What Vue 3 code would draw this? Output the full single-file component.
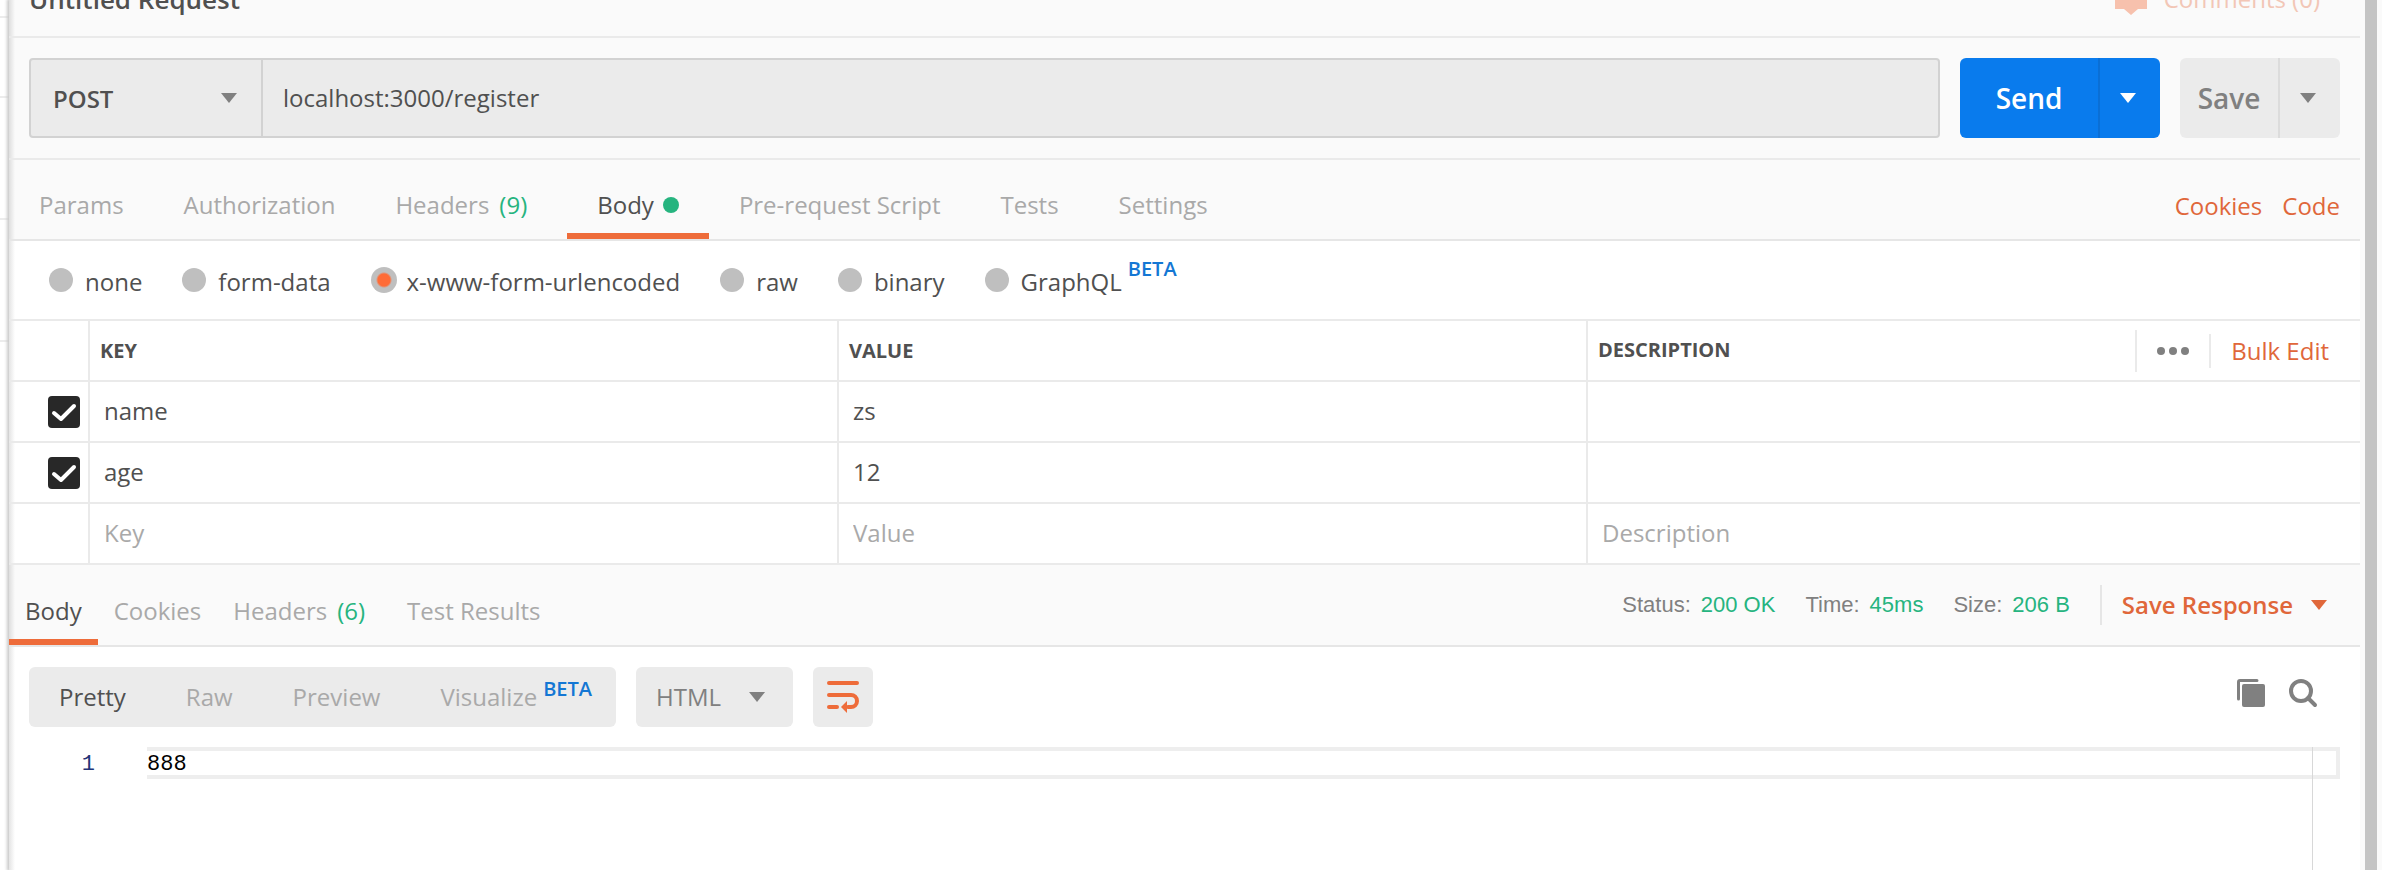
<script setup>
import { ref } from 'vue'

const url = ref('localhost:3000/register')
const mode = ref('x-www-form-urlencoded')
const tabs = [
  { label: 'Params' },
  { label: 'Authorization' },
  { label: 'Headers', count: '(9)' },
  { label: 'Body', active: true, dot: true },
  { label: 'Pre-request Script' },
  { label: 'Tests' },
  { label: 'Settings' },
]
const modes = [
  { label: 'none' },
  { label: 'form-data' },
  { label: 'x-www-form-urlencoded' },
  { label: 'raw' },
  { label: 'binary' },
  { label: 'GraphQL', beta: true },
]
const rows = ref([
  { on: true, key: 'name', value: 'zs', description: '' },
  { on: true, key: 'age', value: '12', description: '' },
])
const responseTabs = [
  { label: 'Body', active: true },
  { label: 'Cookies' },
  { label: 'Headers', count: '(6)' },
  { label: 'Test Results' },
]
const stats = [
  { label: 'Status:', value: '200 OK' },
  { label: 'Time:', value: '45ms' },
  { label: 'Size:', value: '206 B' },
]
const views = [
  { label: 'Pretty', active: true },
  { label: 'Raw' },
  { label: 'Preview' },
  { label: 'Visualize', beta: true },
]
</script>

<template>
  <div class="app">
    <aside class="sidebar">
      <div v-for="n in 4" :key="n" class="side-row"></div>
    </aside>
    <main class="panel">
      <header class="title-bar">
        <h1>Untitled Request</h1>
        <button class="comments" type="button">
          <svg width="34" height="34" viewBox="0 0 34 34" aria-hidden="true">
            <path d="M1 3h32v24h-9l-7 6-7-6H1z" fill="#f7c1ad" />
          </svg>
          Comments (0)
        </button>
      </header>

      <section class="request-bar">
        <div class="url-group">
          <div class="method">
            <select aria-label="Method"><option>POST</option></select>
            <span class="caret"></span>
          </div>
          <input v-model="url" class="url" type="text" aria-label="Request URL" />
        </div>
        <div class="split send">
          <button class="main" type="button">Send</button>
          <button class="more" type="button" aria-label="Send options"><span class="caret"></span></button>
        </div>
        <div class="split save">
          <button class="main" type="button">Save</button>
          <button class="more" type="button" aria-label="Save options"><span class="caret"></span></button>
        </div>
      </section>

      <nav class="tabs">
        <button v-for="t in tabs" :key="t.label" type="button" :class="{ active: t.active }">
          {{ t.label }}<span v-if="t.count" class="count">{{ t.count }}</span><span v-if="t.dot" class="dot"></span>
        </button>
        <div class="links">
          <a href="#">Cookies</a>
          <a href="#">Code</a>
        </div>
      </nav>

      <div class="modes">
        <label v-for="m in modes" :key="m.label">
          <input v-model="mode" type="radio" name="mode" :value="m.label" />
          <span>{{ m.label }}</span><span v-if="m.beta" class="beta">BETA</span>
        </label>
      </div>

      <table class="params">
        <colgroup>
          <col class="check-col" /><col /><col /><col class="desc-col" />
        </colgroup>
        <thead>
          <tr>
            <th></th>
            <th>KEY</th>
            <th>VALUE</th>
            <th>
              <div class="desc-head">
                <span>DESCRIPTION</span>
                <div class="head-tools">
                  <button class="dots" type="button" aria-label="Columns"><i></i><i></i><i></i></button>
                  <button class="bulk" type="button">Bulk Edit</button>
                </div>
              </div>
            </th>
          </tr>
        </thead>
        <tbody>
          <tr v-for="r in rows" :key="r.key">
            <td class="check">
              <label>
                <input v-model="r.on" type="checkbox" :aria-label="'Use ' + r.key" />
                <svg width="32" height="32" viewBox="0 0 32 32" aria-hidden="true">
                  <path d="M6 17l7 6L26 10" fill="none" stroke="#fff" stroke-width="4" stroke-linecap="round" stroke-linejoin="round" />
                </svg>
              </label>
            </td>
            <td><input v-model="r.key" type="text" aria-label="Key" /></td>
            <td><input v-model="r.value" type="text" aria-label="Value" /></td>
            <td><input v-model="r.description" type="text" aria-label="Description" /></td>
          </tr>
          <tr>
            <td></td>
            <td><input type="text" placeholder="Key" aria-label="New key" /></td>
            <td><input type="text" placeholder="Value" aria-label="New value" /></td>
            <td><input type="text" placeholder="Description" aria-label="New description" /></td>
          </tr>
        </tbody>
      </table>

      <section class="response-bar">
        <nav class="response-tabs">
          <button v-for="t in responseTabs" :key="t.label" type="button" :class="{ active: t.active }">
            {{ t.label }}<span v-if="t.count" class="count">{{ t.count }}</span>
          </button>
        </nav>
        <div class="meta">
          <span v-for="s in stats" :key="s.label" class="stat">{{ s.label }}<b>{{ s.value }}</b></span>
          <button class="save-response" type="button">Save Response<span class="caret"></span></button>
        </div>
      </section>

      <section class="toolbar">
        <div class="views">
          <button v-for="v in views" :key="v.label" type="button" :class="{ active: v.active }">
            {{ v.label }}<span v-if="v.beta" class="beta">BETA</span>
          </button>
        </div>
        <div class="format">
          <select aria-label="Format"><option>HTML</option></select>
          <span class="caret"></span>
        </div>
        <button class="wrap" type="button" aria-label="Wrap lines">
          <svg width="32" height="32" viewBox="0 0 32 32" fill="none" stroke="#ee6c3a" stroke-width="4" stroke-linecap="round" aria-hidden="true">
            <path d="M2 2h28M2 14h22a6 6 0 0 1 0 12h-3M2 26h8" />
            <path d="M14 26l6-6v12z" fill="#ee6c3a" stroke="none" />
          </svg>
        </button>
        <div class="icons">
          <button type="button" aria-label="Copy">
            <svg width="30" height="30" viewBox="0 0 30 30" aria-hidden="true">
              <path d="M2.500 21V4a1.500 1.500 0 0 1 1.500-1.500h17" fill="none" stroke="#808080" stroke-width="3" stroke-linecap="round" />
              <rect x="6" y="6" width="23" height="23" rx="2" fill="#808080" />
            </svg>
          </button>
          <button type="button" aria-label="Search">
            <svg width="30" height="30" viewBox="0 0 30 30" fill="none" stroke="#808080" aria-hidden="true">
              <circle cx="13" cy="13" r="10" stroke-width="4" />
              <path d="M20 20l7 7" stroke-width="4" stroke-linecap="round" />
            </svg>
          </button>
        </div>
      </section>

      <section class="editor">
        <span class="line-no">1</span>
        <div class="code">
          <code>888</code>
          <span class="ruler"></span>
        </div>
      </section>
    </main>
    <div class="scrollbar"></div>
  </div>
</template>

<style>
body {
  overflow: hidden;
}
</style>

<style scoped>
.app {
  display: flex;
  height: 100vh;
  overflow: hidden;
  background: #fff;
  color: #505050;
  font: 24px/34px "Open Sans", "Noto Sans", sans-serif;
}
* {
  box-sizing: border-box;
}
button,
input,
select {
  margin: 0;
  padding: 0;
  border: 0;
  border-radius: 0;
  outline: 0;
  background: none;
  color: inherit;
  font: inherit;
  appearance: none;
}
a {
  color: #e0673a;
  text-decoration: none;
}
.caret {
  flex: none;
  width: 16px;
  height: 10px;
  background: currentColor;
  clip-path: polygon(0 0, 100% 0, 50% 100%);
  pointer-events: none;
}
.sidebar {
  flex: none;
  width: 9px;
  padding-top: 16px;
}
.side-row {
  height: 122px;
  border-top: 2px solid #ececec;
}
.side-row:first-child {
  height: 80px;
}
.panel {
  flex: 1;
  min-width: 0;
  display: flex;
  flex-direction: column;
  box-shadow: -1px 0 3px 1px #c8c8c8;
  background: linear-gradient(90deg, #e4e4e4, #fff 6px);
}
.title-bar {
  flex: none;
  display: flex;
  justify-content: space-between;
  align-items: flex-end;
  height: 38px;
  padding: 0 40px 20px 20px;
  border-bottom: 2px solid #eaeaea;
  background: linear-gradient(90deg, #dedede, #fafafa 6px);
}
h1 {
  margin: 0;
  font-size: 26px;
  line-height: 34px;
  font-weight: 600;
}
.comments {
  display: flex;
  align-items: center;
  gap: 16px;
  color: #f2c6b6;
}
.request-bar {
  flex: none;
  display: flex;
  gap: 20px;
  padding: 20px 20px;
  border-bottom: 2px solid #eaeaea;
  background: linear-gradient(90deg, #dedede, #fafafa 6px);
}
.url-group {
  flex: 1;
  display: flex;
  height: 80px;
  border: 2px solid #d2d2d2;
  border-radius: 4px;
  background: #ebebeb;
}
.method {
  display: flex;
  align-items: center;
  width: 232px;
  padding: 0 24px 0 0;
  border-right: 2px solid #d2d2d2;
  color: #808080;
}
.method select {
  flex: 1;
  align-self: stretch;
  min-width: 0;
  padding: 2px 0 0 22px;
  color: #505050;
  font-weight: 600;
}
.url {
  flex: 1;
  padding: 0 20px;
}
.split {
  display: flex;
  height: 80px;
  border-radius: 6px;
  overflow: hidden;
  font-size: 28px;
  font-weight: 600;
}
.split .more {
  display: flex;
  align-items: center;
  justify-content: center;
  width: 62px;
  padding-right: 4px;
}
.send {
  background: #097bed;
  color: #fff;
}
.send .main {
  width: 138px;
}
.send .more {
  border-left: 2px solid #0a6fd6;
}
.save {
  background: #ebebeb;
  color: #808080;
}
.save .main {
  width: 98px;
}
.save .more {
  border-left: 2px solid #dcdcdc;
}
.tabs {
  flex: none;
  display: flex;
  height: 81px;
  padding-right: 20px;
  border-bottom: 2px solid #e6e6e6;
  background: linear-gradient(90deg, #dedede, #fafafa 6px);
}
.tabs > button {
  display: flex;
  align-items: center;
  padding: 16px 30px 0;
  border-bottom: 6px solid transparent;
  color: #a9a9a9;
}
.tabs > button.active,
.response-tabs > button.active {
  border-color: #ee6c3a;
  color: #505050;
}
.count {
  margin: 0 10px;
  color: #26b47f;
}
.dot {
  width: 16px;
  height: 16px;
  margin-left: 9px;
  border-radius: 50%;
  background: #26b47f;
}
.links {
  display: flex;
  align-items: center;
  gap: 20px;
  margin-left: auto;
  padding-top: 12px;
}
.modes {
  flex: none;
  display: flex;
  gap: 40px;
  height: 78px;
  padding-left: 40px;
}
.modes label {
  display: flex;
  align-items: center;
}
.modes input {
  width: 24px;
  height: 24px;
  margin-right: 12px;
  border-radius: 50%;
  background: #bfbfbf;
}
.modes input:checked {
  width: 26px;
  height: 26px;
  margin-right: 10px;
  background: radial-gradient(circle, #ff6c37 6px, #bfbfbf 8px);
}
.modes label > span {
  padding-top: 4px;
}
.beta {
  margin-left: 6px;
  color: #1477d4;
  font-size: 20px;
  line-height: 20px;
  font-weight: 600;
}
.modes label > .beta {
  padding: 0 0 22px;
}
.params {
  flex: none;
  width: 100%;
  border-collapse: collapse;
  table-layout: fixed;
  border-bottom: 2px solid #eaeaea;
}
.check-col {
  width: 80px;
}
.desc-col {
  width: 773px;
}
.params th,
.params td {
  height: 61px;
  padding: 0;
  border-top: 2px solid #eaeaea;
  border-left: 2px solid #eaeaea;
  text-align: left;
}
.params th:first-child,
.params td:first-child {
  border-left: 0;
}
.params th {
  padding-left: 10px;
  font-size: 20px;
  font-weight: 700;
}
.params td > input {
  display: block;
  width: 100%;
  height: 56px;
  padding: 0 0 2px 14px;
}
.params input::placeholder {
  color: #a9a9a9;
  opacity: 1;
}
.check label {
  position: relative;
  display: block;
  width: 32px;
  height: 32px;
  margin-left: 39px;
}
.check input {
  display: block;
  width: 32px;
  height: 32px;
  border-radius: 4px;
  background: #282828;
}
.check svg {
  position: absolute;
  inset: 0;
  pointer-events: none;
}
.desc-head,
.head-tools {
  display: flex;
  align-items: center;
}
.desc-head {
  justify-content: space-between;
}
.desc-head > span {
  padding-bottom: 2px;
}
.head-tools {
  height: 42px;
  border-left: 2px solid #eaeaea;
}
.dots {
  display: flex;
  gap: 4px;
  padding: 0 20px;
}
.dots i {
  width: 8px;
  height: 8px;
  border-radius: 50%;
  background: #808080;
}
.bulk {
  padding: 0 31px 0 20px;
  border-left: 2px solid #eaeaea;
  color: #e0673a;
  font-size: 24px;
  font-weight: 400;
}
.response-bar {
  flex: none;
  display: flex;
  justify-content: space-between;
  height: 82px;
  border-bottom: 2px solid #e6e6e6;
  background: linear-gradient(90deg, #dedede, #fafafa 6px);
}
.response-tabs {
  display: flex;
}
.response-tabs > button {
  padding: 17px 16px 0;
  border-bottom: 6px solid transparent;
  color: #a9a9a9;
}
.meta {
  display: flex;
  align-items: center;
  gap: 30px;
  color: #808080;
  font: 22px/30px "Liberation Sans", Arial, sans-serif;
}
.stat b {
  margin-left: 10px;
  color: #26b47f;
  font-weight: 400;
}
.save-response {
  display: flex;
  align-items: center;
  gap: 18px;
  height: 40px;
  padding: 0 33px 0 20px;
  border-left: 2px solid #e6e6e6;
  color: #e0673a;
  font: 600 24px/34px "Open Sans", "Noto Sans", sans-serif;
}
.toolbar {
  flex: none;
  display: flex;
  gap: 20px;
  padding: 20px 42px 20px 20px;
}
.views,
.format,
.wrap {
  display: flex;
  align-items: center;
  height: 60px;
  border-radius: 6px;
  background: #ebebeb;
}
.views button {
  display: flex;
  height: 60px;
  align-items: center;
  padding: 0 30px;
  color: #a9a9a9;
}
.views button.active {
  color: #505050;
}
.views button:last-child {
  padding-right: 24px;
}
.views .beta {
  padding-bottom: 16px;
}
.format {
  width: 157px;
  padding-right: 28px;
  color: #808080;
}
.format select {
  flex: 1;
  min-width: 0;
  height: 60px;
  padding-left: 20px;
}
.wrap {
  width: 60px;
  justify-content: center;
}
.icons {
  display: flex;
  gap: 22px;
  margin-left: auto;
  padding-top: 11px;
}
.icons button {
  height: 30px;
}
.icons svg {
  display: block;
}
.editor {
  flex: 1;
  display: flex;
  padding-right: 20px;
  font: 22px/36px "Liberation Mono", monospace;
}
.line-no {
  width: 86px;
  color: #237;
  text-align: right;
}
.code {
  position: relative;
  flex: 1;
  margin-left: 52px;
}
code {
  display: block;
  height: 32px;
  border: 4px solid #eee;
  border-left: 0;
  color: #000;
  font: 22px/28px "Liberation Mono", monospace;
}
.ruler {
  position: absolute;
  top: 0;
  right: 27px;
  bottom: 0;
  width: 1px;
  background: #d8d8d8;
}
.scrollbar {
  flex: none;
  width: 22px;
  border: solid #fafafa;
  border-width: 0 5px;
  background: #c4c4c4;
}
</style>
